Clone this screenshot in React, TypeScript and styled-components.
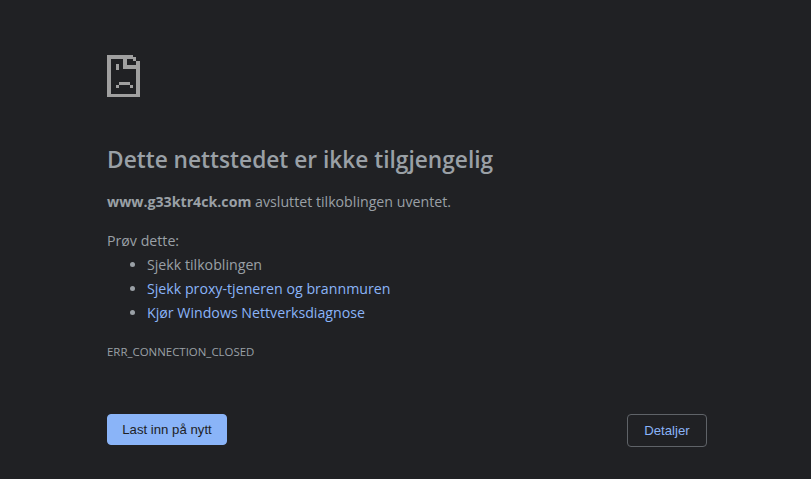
import React from 'react';
import styled, { createGlobalStyle } from 'styled-components';

const GlobalStyle = createGlobalStyle`
    html, body {
        margin: 0;
        padding: 0;
        height: 100%;
        background: #202124;
    }
    body {
        font-family: "Open Sans", "Liberation Sans", sans-serif;
        overflow: hidden;
    }
`;

const Page = styled.div`
    box-sizing: border-box;
    width: 811px;
    height: 479px;
    padding: 55px 104px 0 107px;
    background: #202124;
    color: #9aa0a6;
    display: flex;
    flex-direction: column;
`;

const IconWrap = styled.div`
    width: 33px;
    height: 42px;
    margin-bottom: 49px;
`;

const Heading = styled.h1`
    margin: 0 0 17px;
    font-size: 22.7px;
    line-height: 27px;
    font-weight: 600;
    color: #9aa0a6;
`;

const Paragraph = styled.p`
    margin: 0 0 15px;
    font-size: 14.2px;
    line-height: 24px;
`;

const Host = styled.strong`
    font-weight: 700;
`;

const Hints = styled.div`
    font-size: 14.2px;
    line-height: 24px;
`;

const HintList = styled.ul`
    margin: 0;
    padding-left: 40px;
    list-style: disc;
`;

const Hint = styled.li<{ $link?: boolean }>`
    color: ${p => (p.$link ? '#8ab4f8' : '#9aa0a6')};
    &::marker {
        color: #9aa0a6;
    }
`;

const ErrorCode = styled.div`
    margin-top: 18px;
    font-size: 11.45px;
    line-height: 18px;
    text-transform: uppercase;
`;

const Buttons = styled.div`
    margin-top: 53px;
    display: flex;
    justify-content: space-between;
    align-items: flex-start;
`;

const Button = styled.button<{ $primary?: boolean }>`
    box-sizing: border-box;
    height: ${p => (p.$primary ? '31px' : '33px')};
    width: ${p => (p.$primary ? '120px' : '80px')};
    padding: 0;
    border-radius: 4px;
    border: 1px solid ${p => (p.$primary ? '#8ab4f8' : '#5f6368')};
    background: ${p => (p.$primary ? '#8ab4f8' : 'transparent')};
    color: ${p => (p.$primary ? '#202124' : '#8ab4f8')};
    font-family: "Liberation Sans", Arial, sans-serif;
    font-size: 13.2px;
    font-weight: 400;
`;

function SadPage() {
    return (
        <svg width="33" height="42" viewBox="0 0 33 42" shapeRendering="crispEdges" fill="#a0a0a0">
            <path fillRule="evenodd" d="M0 0H26V2H29V6H33V42H0ZM4 4V39H29V14H16V4ZM20 4V10H29V6H26V4Z" />
            <rect x="9" y="9" width="3" height="6" />
            <rect x="12" y="27" width="11" height="3" />
            <rect x="9" y="30" width="3" height="3" />
            <rect x="23" y="30" width="3" height="3" />
        </svg>
    );
}

export default function App() {
    return (
        <Page>
            <GlobalStyle />
            <IconWrap>
                <SadPage />
            </IconWrap>
            <Heading>Dette nettstedet er ikke tilgjengelig</Heading>
            <Paragraph>
                <Host>www.g33ktr4ck.com</Host> avsluttet tilkoblingen uventet.
            </Paragraph>
            <Hints>
                Prøv dette:
                <HintList>
                    <Hint>Sjekk tilkoblingen</Hint>
                    <Hint $link>Sjekk proxy-tjeneren og brannmuren</Hint>
                    <Hint $link>Kjør Windows Nettverksdiagnose</Hint>
                </HintList>
            </Hints>
            <ErrorCode>ERR_CONNECTION_CLOSED</ErrorCode>
            <Buttons>
                <Button $primary>Last inn på nytt</Button>
                <Button>Detaljer</Button>
            </Buttons>
        </Page>
    );
}
